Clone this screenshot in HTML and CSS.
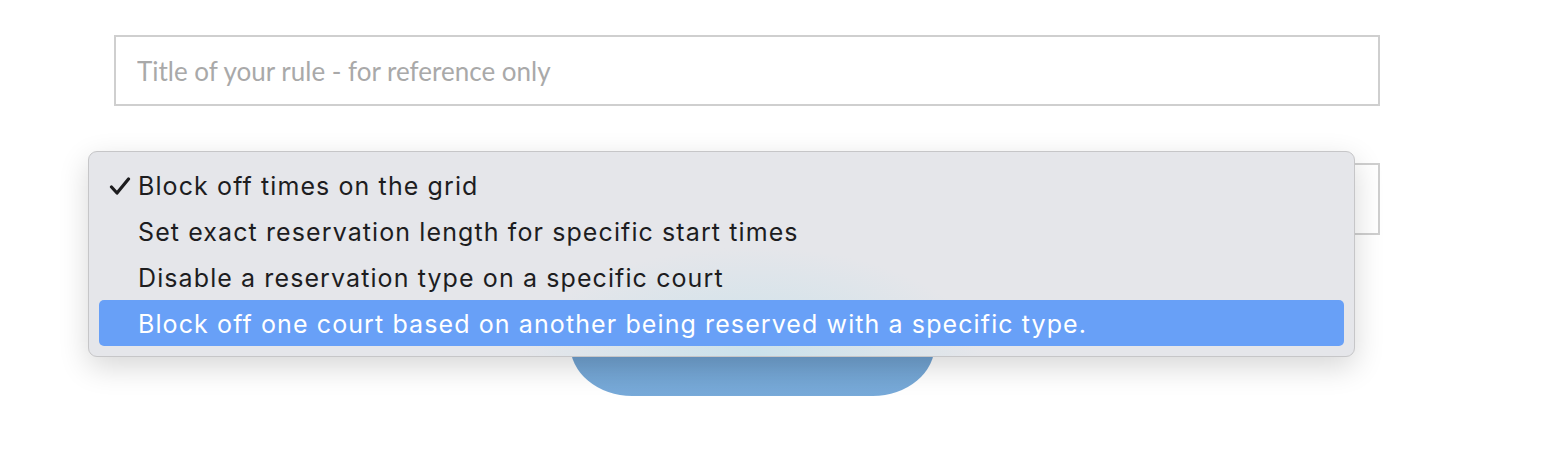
FILE: index.html
```html
<!DOCTYPE html>
<html lang="en">
<head>
    <meta charset="UTF-8">
    <meta name="viewport" content="width=device-width, initial-scale=1.0">
    <title>Rule editor</title>
    <link rel="stylesheet" href="styles.css">
</head>
<body>
    <div class="rule-form">
        <input type="text" class="rule-title" placeholder="Title of your rule - for reference only">
        <div class="rule-select"></div>
        <div class="actions">
            <div class="save-button"></div>
        </div>

        <ul class="select-menu">
            <li class="option checked">
                <svg class="check" width="22" height="18" viewBox="0 0 22 18">
                    <path d="M2.5 10 L8 16 L19.5 2" fill="none" stroke="#1d1d1f" stroke-width="3.2" stroke-linecap="round" stroke-linejoin="round"/>
                </svg>
                Block off times on the grid
            </li>
            <li class="option">Set exact reservation length for specific start times</li>
            <li class="option">Disable a reservation type on a specific court</li>
            <li class="option active">Block off one court based on another being reserved with a specific type.</li>
        </ul>
    </div>
</body>
</html>
```

FILE: styles.css
```css
* {
    margin: 0;
    padding: 0;
    box-sizing: border-box;
}

html, body {
    min-height: 100%;
}

body {
    background: #fff;
    min-height: 466px;
    padding: 35px 0 0 114px;
    font-family: "Lato", sans-serif;
}

.rule-form {
    position: relative;
    width: 1266px;
    display: flex;
    flex-direction: column;
}

.rule-title {
    height: 71px;
    border: 2px solid #cfcfcf;
    padding: 0 21px;
    font-family: "Lato", sans-serif;
    font-size: 26px;
    color: #333;
    outline: none;
}

.rule-title::placeholder {
    color: #a9a9a9;
}

.rule-select {
    margin-top: 57px;
    height: 72px;
    border: 2px solid #cfcfcf;
}

.actions {
    display: flex;
    padding-left: 456px;
    margin-top: 35px;
}

.save-button {
    width: 365px;
    height: 126px;
    border-radius: 0 0 62px 62px / 0 0 52px 52px;
    background: linear-gradient(#6393c1, #78aad9);
}

/* native select popup */
.select-menu {
    position: absolute;
    left: -26px;
    top: 116px;
    width: 1267px;
    height: 206px;
    list-style: none;
    padding: 10px 10px 0 10px;
    background:
        radial-gradient(ellipse 230px 110px at 664px 205px, rgba(200, 225, 235, 0.9), rgba(229, 230, 234, 0) 100%),
        #e5e6ea;
    border: 1px solid #c6c6c8;
    border-radius: 9px;
    box-shadow: 0 10px 30px rgba(0, 0, 0, 0.16);
    font-family: "Inter", sans-serif;
    font-size: 25px;
    letter-spacing: 1.1px;
    color: #1d1d1f;
}

.option {
    position: relative;
    height: 46px;
    line-height: 48px;
    padding-left: 39px;
    border-radius: 5px;
    white-space: nowrap;
}

.option .check {
    position: absolute;
    left: 10px;
    top: 15px;
}

.option.active {
    background: #68a0f7;
    color: #fff;
}
```
